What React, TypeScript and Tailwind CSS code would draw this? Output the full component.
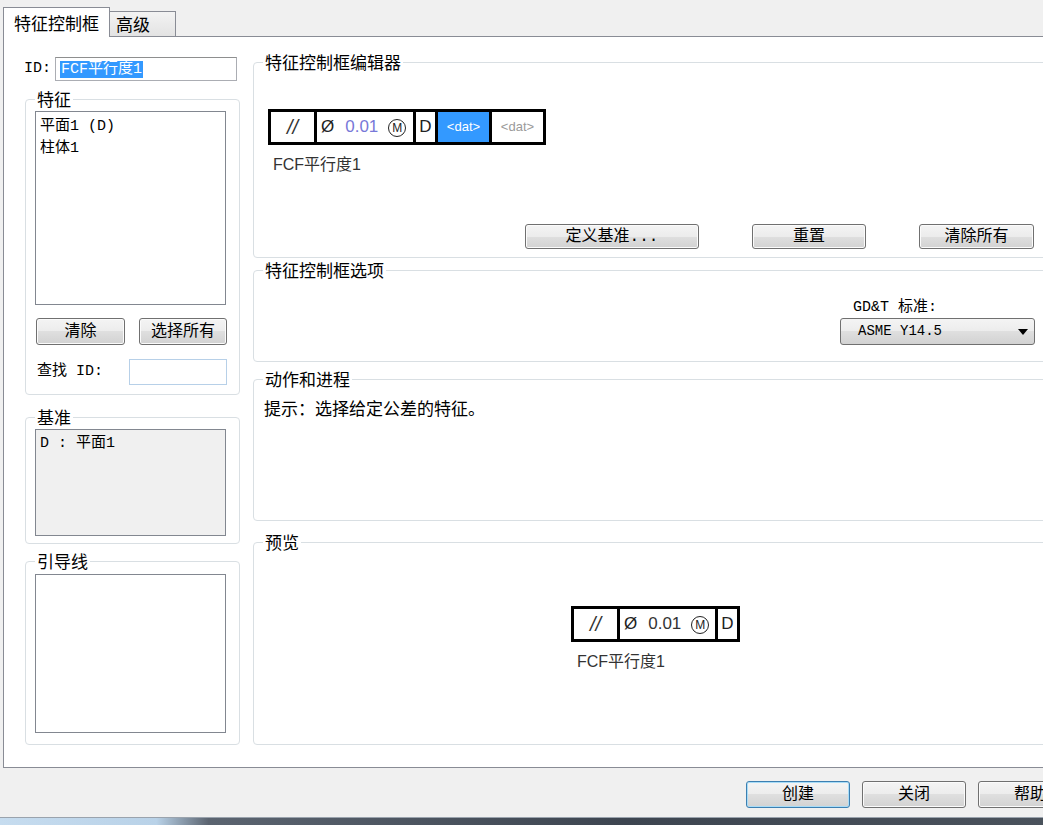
import React from "react";

const F = "font-['Noto_Sans_CJK_SC','Noto_Sans',sans-serif]";
const M = "font-['Liberation_Mono','Noto_Sans_CJK_SC',monospace]";
const A = "font-['Liberation_Sans','Noto_Sans_CJK_SC',sans-serif]";

function Btn({ children, cls = "", def = false }: { children: React.ReactNode; cls?: string; def?: boolean }) {
  return (
    <div
      className={`flex items-center justify-center rounded-[3px] border ${
        def ? "border-[#3c7fb1] shadow-[inset_0_0_0_1px_#a8dcf7]" : "border-[#707070] shadow-[inset_0_0_0_1px_#fbfbfb]"
      } bg-[linear-gradient(#f4f4f4_0%,#ececec_50%,#dfdfdf_50%,#d2d2d2_100%)] text-[16px] leading-none text-black ${M} ${cls}`}
    >
      {children}
    </div>
  );
}

function CircleM() {
  return (
    <span className={`inline-flex h-[18px] w-[18px] items-center justify-center rounded-full border-[1.5px] border-[#222] text-[12px] leading-none text-[#222] ${A}`}>
      M
    </span>
  );
}

function Frame({ editor }: { editor?: boolean }) {
  return (
    <div className={`flex h-[36px] border-[3px] border-black ${A}`}>
      <div className="flex w-[43px] items-center justify-center text-[20px] italic text-[#333]">//</div>
      <div className={`flex ${editor ? "w-[99px]" : "w-[98px]"} items-center border-l-[3px] border-black pl-[4px] text-[17px]`}>
        <span className="text-[#222]">Ø</span>
        <span className={`ml-[11px] ${editor ? "text-[#7878d8]" : "text-[#333]"}`}>0.01</span>
        <span className="ml-[10px]">
          <CircleM />
        </span>
      </div>
      <div className="flex w-[22px] items-center justify-center border-l-[3px] border-black text-[17px] text-[#222]">D</div>
      {editor && (
        <>
          <div className="flex w-[54px] items-center justify-center border-l-[3px] border-black bg-[#3399ff] text-[13px] text-white">&lt;dat&gt;</div>
          <div className="flex w-[54px] items-center justify-center border-l-[3px] border-black text-[13px] text-[#9a9a9a]">&lt;dat&gt;</div>
        </>
      )}
    </div>
  );
}

const fs = "rounded-[4px] border border-[#d9dfe3] px-[9px]";
const lg = `ml-0 px-[2px] text-[17px] leading-[18px] text-black ${F}`;

export default function App() {
  return (
    <div className={`flex h-[825px] w-[1043px] flex-col overflow-hidden bg-[#f0f0f0] ${F}`}>
      {/* tabs */}
      <div className="flex h-[36px] items-end pl-[3px]">
        <div className="relative z-10 mb-[-1px] flex h-[30px] w-[107px] items-center border border-b-0 border-[#898c95] bg-white pl-[10px] text-[17px] text-black">
          特征控制框
        </div>
        <div className="flex h-[25px] w-[66px] items-center border border-b-0 border-l-0 border-[#898c95] bg-[linear-gradient(#f3f3f3,#e3e3e3)] pl-[6px] text-[17px] text-black">
          高级
        </div>
      </div>

      {/* tab page */}
      <div className="ml-[3px] flex h-[732px] w-[1090px] shrink-0 border border-[#898c95] bg-white">
        {/* left column */}
        <div className="ml-[20px] flex w-[216px] flex-col">
          <div className="mt-[20px] flex h-[24px] items-center">
            <span className={`w-[31px] text-[15px] text-black ${M}`}>ID:</span>
            <div className="flex h-[24px] w-[182px] items-center border border-[#abadb3] border-t-[#8e8f8f] pl-[4px]">
              <span className={`bg-[#3399ff] px-[1px] text-[15px] leading-[17px] text-white ${M}`}>FCF平行度1</span>
            </div>
          </div>

          <fieldset className={`${fs} ml-[1px] mt-[9px] w-[215px] pb-[9px]`}>
            <legend className={lg}>特征</legend>
            <div className={`mt-[3px] h-[194px] w-[191px] border border-[#828790] bg-white px-[4px] pt-[4px] text-[15px] leading-[22px] text-black ${M}`}>
              <div>平面1 (D)</div>
              <div>柱体1</div>
            </div>
            <div className="mt-[13px] flex w-[192px] justify-between pl-[1px]">
              <Btn cls="h-[27px] w-[89px]">清除</Btn>
              <Btn cls="h-[27px] w-[88px]">选择所有</Btn>
            </div>
            <div className="mt-[14px] flex h-[26px] items-center">
              <span className={`ml-[2px] w-[92px] text-[15px] text-black ${M}`}>查找 ID:</span>
              <div className="h-[26px] w-[98px] border border-[#b7d0e8] bg-white" />
            </div>
          </fieldset>

          <fieldset className={`${fs} ml-[1px] mt-[13px] w-[215px] pb-[7px]`}>
            <legend className={lg}>基准</legend>
            <div className={`mt-[3px] h-[107px] w-[191px] border border-[#828790] bg-[#f0f0f0] px-[4px] pt-[3px] text-[15px] leading-[22px] text-black ${M}`}>
              <div>D : 平面1</div>
            </div>
          </fieldset>

          <fieldset className={`${fs} ml-[1px] mt-[8px] w-[215px] pb-[11px]`}>
            <legend className={lg}>引导线</legend>
            <div className="mt-[4px] h-[159px] w-[191px] border border-[#828790] bg-white" />
          </fieldset>
        </div>

        {/* right column */}
        <div className="ml-[13px] flex w-[800px] flex-col">
          <fieldset className={`${fs} mt-[16px] pb-[8px]`}>
            <legend className={lg}>特征控制框编辑器</legend>
            <div className="ml-[5px] mt-[38px] flex">
              <Frame editor />
            </div>
            <div className={`ml-[10px] mt-[10px] h-[20px] text-[16px] leading-[20px] text-[#333] ${A}`}>FCF平行度1</div>
            <div className="mt-[49px] flex">
              <Btn cls="ml-[262px] h-[25px] w-[174px]">定义基准...</Btn>
              <Btn cls="ml-[53px] h-[25px] w-[114px]">重置</Btn>
              <Btn cls="ml-[53px] h-[25px] w-[115px]">清除所有</Btn>
            </div>
          </fieldset>

          <fieldset className={`${fs} mt-[3px] pb-[16px]`}>
            <legend className={lg}>特征控制框选项</legend>
            <div className="ml-[577px] mt-[19px] flex flex-col">
              <div className={`ml-[13px] h-[20px] text-[15px] leading-[20px] text-black ${M}`}>GD&amp;T 标准:</div>
              <div className="flex h-[27px] w-[195px] items-center justify-between rounded-[3px] border border-[#707070] bg-[linear-gradient(#f4f4f4_0%,#ececec_50%,#dfdfdf_50%,#d2d2d2_100%)] pl-[17px] pr-[6px]">
                <span className={`text-[14px] text-black ${M}`}>ASME Y14.5</span>
                <svg width="10" height="6" viewBox="0 0 10 6">
                  <path d="M0 0 L10 0 L5 6 Z" fill="#000" />
                </svg>
              </div>
            </div>
          </fieldset>

          <fieldset className={`${fs} mt-[8px] pb-[102px]`}>
            <legend className={lg}>动作和进程</legend>
            <div className="mt-[10px] h-[20px] pl-[1px] text-[17px] leading-[20px] text-black">提示：选择给定公差的特征。</div>
          </fieldset>

          <fieldset className={`${fs} mt-[12px] pb-[72px]`}>
            <legend className={lg}>预览</legend>
            <div className="ml-[308px] mt-[55px] flex">
              <Frame />
            </div>
            <div className={`ml-[314px] mt-[10px] h-[20px] text-[16px] leading-[20px] text-[#333] ${A}`}>FCF平行度1</div>
          </fieldset>
        </div>
      </div>

      {/* bottom buttons */}
      <div className="flex h-[49px] shrink-0 items-start pt-[13px]">
        <Btn def cls="ml-[746px] h-[27px] w-[104px] shrink-0">创建</Btn>
        <Btn cls="ml-[12px] h-[27px] w-[104px] shrink-0">关闭</Btn>
        <Btn cls="ml-[12px] h-[27px] w-[104px] shrink-0">帮助</Btn>
      </div>

      {/* bottom strip */}
      <div className="h-[8px] shrink-0 border-t border-[#9aa3ad] bg-[linear-gradient(90deg,#c6dcef_0%,#b9d2e8_15%,#5b6470_20%,#3d4550_60%,#4a525c_100%)]" />
    </div>
  );
}
